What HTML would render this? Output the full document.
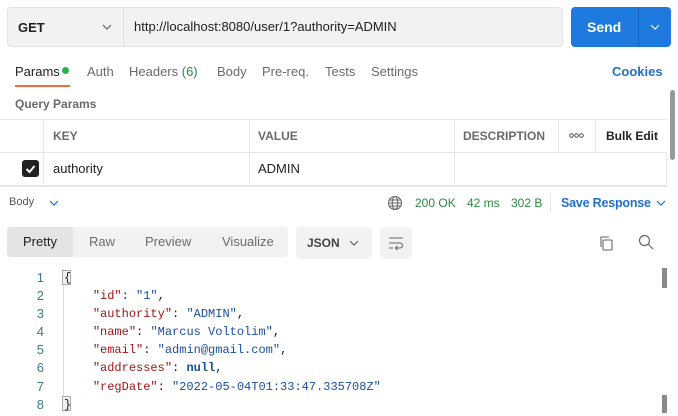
<!DOCTYPE html>
<html><head><style>
*{margin:0;padding:0;box-sizing:border-box}
body{width:678px;height:416px;background:#fff;font-family:"Liberation Sans",sans-serif;position:relative;overflow:hidden;color:#212121}
.a{position:absolute}
.t{font-size:13px;color:#6b6b6b}
.code{font-family:"Liberation Mono",monospace;font-size:12px;white-space:pre}
.k{color:#a31515}.s{color:#1a4fa0}.n{color:#1a4fa0;font-weight:bold}
.ln{color:#3d7a8a;font-family:"Liberation Sans",sans-serif;font-size:13px;width:44px;text-align:right}
</style></head><body>
<div class="a" style="left:7px;top:7px;width:556px;height:40px;background:#f2f2f2;border:1px solid #e4e4e4;border-radius:4px"></div>
<div class="a" style="left:123px;top:8px;width:1px;height:38px;background:#e0e0e0"></div>
<div class="a" style="left:18px;top:20px;font-size:13px;font-weight:bold;color:#212121">GET</div>
<svg class="a" style="left:102px;top:23px" width="10" height="8"><path d="M1 2l4 4 4-4" fill="none" stroke="#666" stroke-width="1.2"/></svg>
<div class="a" style="left:134px;top:19px;font-size:13px;color:#212121">http://localhost:8080/user/1?authority=ADMIN</div>
<div class="a" style="left:571px;top:7px;width:100px;height:40px;background:#1f7ae0;border-radius:4px"></div>
<div class="a" style="left:638px;top:7px;width:1px;height:40px;background:#1462c0"></div>
<div class="a" style="left:587px;top:19px;font-size:14px;font-weight:bold;color:#fff">Send</div>
<svg class="a" style="left:650px;top:23px" width="10" height="8"><path d="M1 2l4 4 4-4" fill="none" stroke="#fff" stroke-width="1.2"/></svg>

<div class="a" style="left:15px;top:64px;font-size:13px;color:#212121">Params</div>
<div class="a" style="left:62px;top:67px;width:7px;height:7px;border-radius:50%;background:#2bb24c"></div>
<div class="a" style="left:15px;top:85px;width:55px;height:2px;background:#f26b3a"></div>
<div class="a t" style="left:87px;top:64px">Auth</div>
<div class="a t" style="left:129px;top:64px">Headers <span style="color:#2a8a3e">(6)</span></div>
<div class="a t" style="left:217px;top:64px">Body</div>
<div class="a t" style="left:262px;top:64px">Pre-req.</div>
<div class="a t" style="left:325px;top:64px">Tests</div>
<div class="a t" style="left:371px;top:64px">Settings</div>
<div class="a" style="left:612px;top:64px;font-size:13px;font-weight:bold;color:#1f6fd0">Cookies</div>
<div class="a" style="left:15px;top:97px;font-size:12px;font-weight:bold;color:#6b6b6b">Query Params</div>

<div class="a" style="left:0;top:119px;width:667px;height:1px;background:#e6e6e6"></div>
<div class="a" style="left:0;top:152px;width:667px;height:1px;background:#e6e6e6"></div>
<div class="a" style="left:0;top:185px;width:667px;height:2px;background:#e6e6e6"></div>
<div class="a" style="left:43px;top:119px;width:1px;height:66px;background:#e6e6e6"></div>
<div class="a" style="left:249px;top:119px;width:1px;height:66px;background:#e6e6e6"></div>
<div class="a" style="left:454px;top:119px;width:1px;height:66px;background:#e6e6e6"></div>
<div class="a" style="left:558px;top:119px;width:1px;height:33px;background:#e6e6e6"></div>
<div class="a" style="left:595px;top:119px;width:1px;height:33px;background:#e6e6e6"></div>
<div class="a" style="left:666px;top:152px;width:1px;height:33px;background:#e6e6e6"></div>
<div class="a" style="left:53px;top:129px;font-size:12px;font-weight:bold;color:#6b6b6b">KEY</div>
<div class="a" style="left:258px;top:129px;font-size:12px;font-weight:bold;color:#6b6b6b">VALUE</div>
<div class="a" style="left:463px;top:129px;font-size:12px;font-weight:bold;color:#6b6b6b">DESCRIPTION</div>
<svg class="a" style="left:569px;top:133px" width="16" height="5"><g fill="none" stroke="#444" stroke-width="0.9"><circle cx="2.5" cy="2.5" r="1.8"/><circle cx="7.5" cy="2.5" r="1.8"/><circle cx="12.5" cy="2.5" r="1.8"/></g></svg>
<div class="a" style="left:606px;top:129px;font-size:12px;font-weight:bold;color:#212121">Bulk Edit</div>
<div class="a" style="left:22px;top:160px;width:17px;height:17px;background:#212121;border-radius:3px"></div>
<svg class="a" style="left:22px;top:160px" width="17" height="17"><path d="M4.5 9l3 3 5-6" fill="none" stroke="#fff" stroke-width="2"/></svg>
<div class="a" style="left:53px;top:161px;font-size:13px">authority</div>
<div class="a" style="left:258px;top:161px;font-size:13px">ADMIN</div>
<div class="a" style="left:670px;top:90px;width:5px;height:70px;background:#9a9a9a;border-radius:3px"></div>

<div class="a" style="left:9px;top:196px;font-size:11px;color:#555">Body</div>
<svg class="a" style="left:49px;top:199px" width="10" height="8"><path d="M1 2l4 4 4-4" fill="none" stroke="#1f6fd0" stroke-width="1.2"/></svg>
<svg class="a" style="left:387px;top:195px" width="16" height="16"><g fill="none" stroke="#666" stroke-width="1.1"><circle cx="8" cy="8" r="6.5"/><ellipse cx="8" cy="8" rx="2.8" ry="6.5"/><path d="M1.5 8h13M2.5 5h11M2.5 11h11"/></g></svg>
<div class="a" style="left:415px;top:196px;font-size:12px;color:#2a8a3e">200 OK</div>
<div class="a" style="left:467px;top:196px;font-size:12px;color:#2a8a3e">42 ms</div>
<div class="a" style="left:511px;top:196px;font-size:12px;color:#2a8a3e">302 B</div>
<div class="a" style="left:550px;top:193px;width:1px;height:20px;background:#e6e6e6"></div>
<div class="a" style="left:561px;top:196px;font-size:12.5px;font-weight:bold;color:#1f6fd0;letter-spacing:-0.2px">Save Response</div>
<svg class="a" style="left:656px;top:199px" width="10" height="8"><path d="M1 2l4 4 4-4" fill="none" stroke="#1f6fd0" stroke-width="1.2"/></svg>

<div class="a" style="left:7px;top:227px;width:281px;height:30px;background:#f2f2f2;border-radius:4px"></div>
<div class="a" style="left:7px;top:227px;width:66px;height:30px;background:#e4e4e4;border-radius:4px 0 0 4px"></div>
<div class="a" style="left:23px;top:234px;font-size:13px;color:#212121">Pretty</div>
<div class="a t" style="left:89px;top:234px">Raw</div>
<div class="a t" style="left:145px;top:234px">Preview</div>
<div class="a t" style="left:222px;top:234px">Visualize</div>
<div class="a" style="left:296px;top:227px;width:76px;height:32px;background:#f2f2f2;border-radius:4px"></div>
<div class="a" style="left:307px;top:236px;font-size:12px;font-weight:bold;color:#444">JSON</div>
<svg class="a" style="left:349px;top:239px" width="10" height="8"><path d="M1 2l4 4 4-4" fill="none" stroke="#666" stroke-width="1.2"/></svg>
<div class="a" style="left:380px;top:227px;width:32px;height:32px;background:#f2f2f2;border-radius:4px"></div>
<svg class="a" style="left:388px;top:235px" width="16" height="16"><g fill="none" stroke="#666" stroke-width="1.1"><path d="M1 3h14M1 8h11a2.5 2.5 0 0 1 0 5H8M1 13h4M9.5 11l-2 2 2 2"/></g></svg>
<svg class="a" style="left:598px;top:235px" width="16" height="16"><g fill="none" stroke="#666" stroke-width="1.1"><rect x="5" y="5" width="9" height="10" rx="1"/><path d="M3 12V2h8"/></g></svg>
<svg class="a" style="left:638px;top:234px" width="16" height="16"><g fill="none" stroke="#666" stroke-width="1.2"><circle cx="6.5" cy="6.5" r="5"/><path d="M10 10l5 5"/></g></svg>

<div class="a" style="left:0;top:269px;line-height:18.1px">
<div class="ln">1</div><div class="ln">2</div><div class="ln">3</div><div class="ln">4</div><div class="ln">5</div><div class="ln">6</div><div class="ln">7</div><div class="ln">8</div>
</div>
<div class="a" style="left:63px;top:269px;width:1px;height:144px;background:#ddd"></div>
<div class="a" style="left:62px;top:270px;width:9px;height:15px;border:1px solid #aaa;background:#eef2ee"></div>
<div class="a" style="left:62px;top:396px;width:9px;height:15px;border:1px solid #aaa;background:#eef2ee"></div>
<div class="a code" style="left:64px;top:269px;line-height:18.1px">{
    <span class="k">"id"</span>: <span class="s">"1"</span>,
    <span class="k">"authority"</span>: <span class="s">"ADMIN"</span>,
    <span class="k">"name"</span>: <span class="s">"Marcus Voltolim"</span>,
    <span class="k">"email"</span>: <span class="s">"admin@gmail.com"</span>,
    <span class="k">"addresses"</span>: <span class="n">null</span>,
    <span class="k">"regDate"</span>: <span class="s">"2022-05-04T01:33:47.335708Z"</span>
}</div>
<div class="a" style="left:662px;top:268px;width:5px;height:20px;background:#8a8a8a"></div>
<div class="a" style="left:662px;top:395px;width:5px;height:18px;background:#8a8a8a"></div>
</body></html>
